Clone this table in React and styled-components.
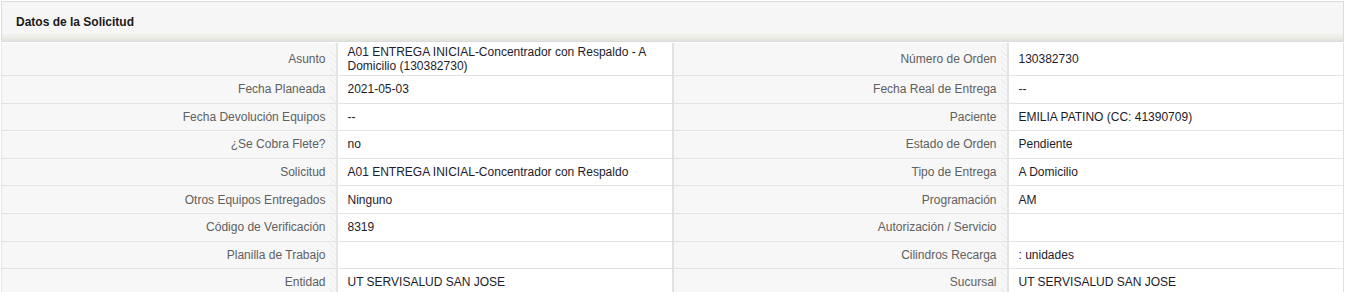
import React from 'react';
import styled, { createGlobalStyle } from 'styled-components';

const rows = [
  ["Asunto", "A01 ENTREGA INICIAL-Concentrador con Respaldo - A Domicilio (130382730)", "Número de Orden", "130382730"],
  ["Fecha Planeada", "2021-05-03", "Fecha Real de Entrega", "--"],
  ["Fecha Devolución Equipos", "--", "Paciente", "EMILIA PATINO (CC: 41390709)"],
  ["¿Se Cobra Flete?", "no", "Estado de Orden", "Pendiente"],
  ["Solicitud", "A01 ENTREGA INICIAL-Concentrador con Respaldo", "Tipo de Entrega", "A Domicilio"],
  ["Otros Equipos Entregados", "Ninguno", "Programación", "AM"],
  ["Código de Verificación", "8319", "Autorización / Servicio", ""],
  ["Planilla de Trabajo", "", "Cilindros Recarga", ": unidades"],
  ["Entidad", "UT SERVISALUD SAN JOSE", "Sucursal", "UT SERVISALUD SAN JOSE"],
];

const App = () => {
  return <>
    <GlobalStyle />
    <Panel>
      <Heading>Datos de la Solicitud</Heading>
      <Table>
        <colgroup>
          <col style={{ width: "335px" }} />
          <col style={{ width: "336px" }} />
          <col style={{ width: "335px" }} />
          <col />
        </colgroup>
        <tbody>
          {rows.map((r, i) => (
            <tr key={i}>
              <Label>{r[0]}</Label>
              <Value>{r[1]}</Value>
              <Label>{r[2]}</Label>
              <Value last>{r[3]}</Value>
            </tr>
          ))}
        </tbody>
      </Table>
    </Panel>
  </>;
};

const GlobalStyle = createGlobalStyle`
  body {
    margin: 0;
    background: #ffffff;
    font-family: "Liberation Sans", Arial, sans-serif;
    font-size: 12px;
  }
`;

const Panel = styled.div`
  width: 1343px;
  margin: 1px 0 0 1px;
`;

const Heading = styled.div`
  height: 41px;
  box-sizing: border-box;
  padding: 0 14px;
  display: flex;
  align-items: center;
  font-weight: bold;
  font-size: 12px;
  color: #1a1a1a;
  border: 1px solid #dcdcdc;
  background: linear-gradient(to bottom, #f6f6f6 0%, #f6f6f6 78%, #ebebe6 92%, #e2e2dc 100%);
`;

const Table = styled.table`
  width: 100%;
  table-layout: fixed;
  border-collapse: collapse;
  margin-top: 1px;
  border-left: 1px solid #e6e6e6;
`;

const Cell = styled.td`
  height: 24.6px;
  padding: 1px 10px;
  line-height: 14px;
  vertical-align: middle;
  border-bottom: 1px solid #e3e3e3;
  tr:first-child > & {
    padding: 2px 10px;
  }
`;

const Label = styled(Cell)`
  text-align: right;
  color: #606060;
  border-right: 2px solid #e4e4e4;
  background:
    linear-gradient(#f7f7f7, #f7f7f7) no-repeat left top / calc(100% - 6px) 100%,
    repeating-linear-gradient(45deg, #ececec 0 1px, #f7f7f7 1px 4px);
`;

const Value = styled(Cell)`
  text-align: left;
  color: #1c1c2c;
  background: #ffffff;
  border-right: ${props => props.last ? "1px solid #e0e0e0" : "2px solid #e2e2e2"};
`;

export default App;
